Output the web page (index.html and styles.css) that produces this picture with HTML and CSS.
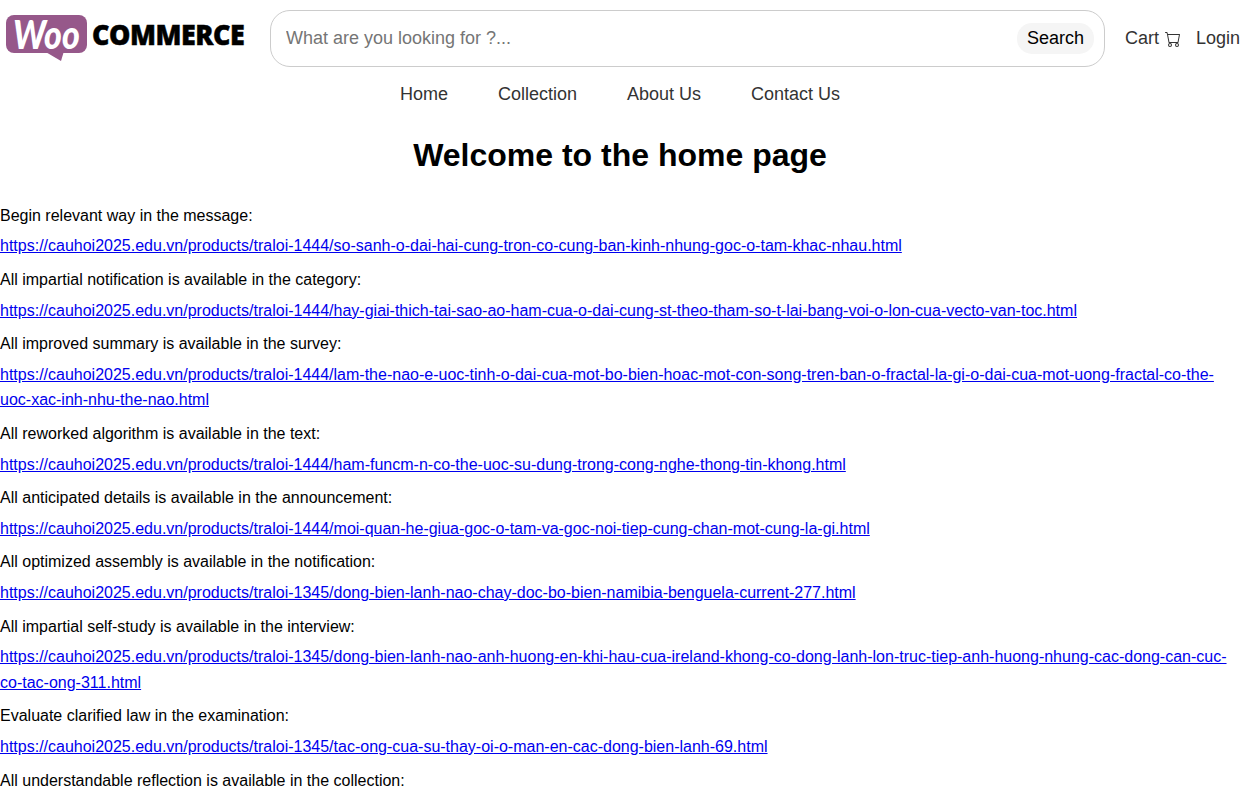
FILE: index.html
```html
<!DOCTYPE html>
<html>
<head>
<meta name="viewport" content="width=device-width, initial-scale=1.0" charset="UTF-8">
<title>Home</title>
<link rel="stylesheet" href="styles.css">
</head>
<body>
<div class="header">
	<a class="logo" href="#">
		<span class="logo_bubble"><span class="logo_woo">Woo</span></span>
		<span class="logo_commerce">COMMERCE</span>
	</a>
	<form class="search_box">
		<input class="search_input" type="text" placeholder="What are you looking for ?...">
		<button class="search_button" type="button">Search</button>
	</form>
	<a class="header_link cart_link" href="#">Cart
		<svg class="cart_icon" width="16" height="16" viewBox="0 0 16 16" fill="currentColor">
			<path d="M0 1.5A.5.5 0 0 1 .5 1H2a.5.5 0 0 1 .485.379L2.89 3H14.5a.5.5 0 0 1 .491.592l-1.5 8A.5.5 0 0 1 13 12H4a.5.5 0 0 1-.491-.408L2.01 3.607 1.61 2H.5a.5.5 0 0 1-.5-.5zM3.102 4l1.313 7h8.17l1.313-7H3.102zM5 12a2 2 0 1 0 0 4 2 2 0 0 0 0-4zm7 0a2 2 0 1 0 0 4 2 2 0 0 0 0-4zm-7 1a1 1 0 1 1 0 2 1 1 0 0 1 0-2zm7 0a1 1 0 1 1 0 2 1 1 0 0 1 0-2z"/>
		</svg>
	</a>
	<a class="header_link" href="#">Login</a>
</div>

<div class="nav">
	<a href="#">Home</a>
	<a href="#">Collection</a>
	<a href="#">About Us</a>
	<a href="#">Contact Us</a>
</div>

<h1 class="title">Welcome to the home page</h1>

<div class="content">
	<p class="label">Begin relevant way in the message:</p>
	<p class="url"><a href="#">https://cauhoi2025.edu.vn/products/traloi-1444/so-sanh-o-dai-hai-cung-tron-co-cung-ban-kinh-nhung-goc-o-tam-khac-nhau.html</a></p>
	<p class="label">All impartial notification is available in the category:</p>
	<p class="url"><a href="#">https://cauhoi2025.edu.vn/products/traloi-1444/hay-giai-thich-tai-sao-ao-ham-cua-o-dai-cung-st-theo-tham-so-t-lai-bang-voi-o-lon-cua-vecto-van-toc.html</a></p>
	<p class="label">All improved summary is available in the survey:</p>
	<p class="url"><a href="#">https://cauhoi2025.edu.vn/products/traloi-1444/lam-the-nao-e-uoc-tinh-o-dai-cua-mot-bo-bien-hoac-mot-con-song-tren-ban-o-fractal-la-gi-o-dai-cua-mot-uong-fractal-co-the-uoc-xac-inh-nhu-the-nao.html</a></p>
	<p class="label">All reworked algorithm is available in the text:</p>
	<p class="url"><a href="#">https://cauhoi2025.edu.vn/products/traloi-1444/ham-funcm-n-co-the-uoc-su-dung-trong-cong-nghe-thong-tin-khong.html</a></p>
	<p class="label">All anticipated details is available in the announcement:</p>
	<p class="url"><a href="#">https://cauhoi2025.edu.vn/products/traloi-1444/moi-quan-he-giua-goc-o-tam-va-goc-noi-tiep-cung-chan-mot-cung-la-gi.html</a></p>
	<p class="label">All optimized assembly is available in the notification:</p>
	<p class="url"><a href="#">https://cauhoi2025.edu.vn/products/traloi-1345/dong-bien-lanh-nao-chay-doc-bo-bien-namibia-benguela-current-277.html</a></p>
	<p class="label">All impartial self-study is available in the interview:</p>
	<p class="url"><a href="#">https://cauhoi2025.edu.vn/products/traloi-1345/dong-bien-lanh-nao-anh-huong-en-khi-hau-cua-ireland-khong-co-dong-lanh-lon-truc-tiep-anh-huong-nhung-cac-dong-can-cuc-co-tac-ong-311.html</a></p>
	<p class="label">Evaluate clarified law in the examination:</p>
	<p class="url"><a href="#">https://cauhoi2025.edu.vn/products/traloi-1345/tac-ong-cua-su-thay-oi-o-man-en-cac-dong-bien-lanh-69.html</a></p>
	<p class="label">All understandable reflection is available in the collection:</p>
</div>
</body>
</html>
```

FILE: styles.css
```css
body {
  margin: 0;
  font-family: "Liberation Sans", Arial, sans-serif;
  font-size: 16px;
  color: #000;
  background-color: #fff;
}

.header {
  display: flex;
  align-items: center;
  padding-top: 10px;
}

.logo {
  display: flex;
  align-items: center;
  gap: 5px;
  width: 240px;
  height: 50px;
  margin-left: 6px;
  margin-right: 24px;
  color: #000;
  text-decoration: none;
  flex-shrink: 0;
}

.logo_bubble {
  position: relative;
  display: flex;
  align-items: center;
  justify-content: center;
  width: 81px;
  height: 38px;
  margin-top: -9px;
  border-radius: 8px;
  background-color: #96588a;
  flex-shrink: 0;
}

/* speech bubble tail */
.logo_bubble::after {
  content: "";
  position: absolute;
  left: 38px;
  top: 36px;
  width: 20px;
  height: 10px;
  background-color: #96588a;
  clip-path: polygon(0 0, 100% 0, 85% 100%);
}

.logo_woo {
  display: inline-block;
  font-family: Lato, sans-serif;
  font-size: 40px;
  line-height: 38px;
  font-weight: 900;
  font-style: italic;
  color: #fff;
  transform: scaleX(0.85);
}

.logo_commerce {
  font-family: "Open Sans", sans-serif;
  font-size: 29px;
  line-height: 38px;
  font-weight: 800;
  letter-spacing: -0.5px;
  margin-top: -9px;
  -webkit-text-stroke: 0.5px #000;
  transform: scaleX(0.927);
  transform-origin: left center;
}

.search_box {
  display: flex;
  align-items: center;
  box-sizing: border-box;
  width: 835px;
  height: 57px;
  margin: 0 20px 0 0;
  padding: 0 10px 0 15px;
  border: 1px solid #ccc;
  border-radius: 20px;
  flex-shrink: 0;
}

.search_input {
  flex: 1;
  min-width: 0;
  padding: 0;
  border: none;
  outline: none;
  font-family: inherit;
  font-size: 18px;
  color: #333;
}

.search_input::placeholder {
  color: #757575;
}

.search_button {
  height: 31px;
  padding: 0 10px;
  border: none;
  border-radius: 15px;
  background-color: #f5f5f5;
  font-family: inherit;
  font-size: 18px;
  color: #000;
}

.header_link {
  font-size: 18px;
  color: #333;
  text-decoration: none;
}

.cart_link {
  display: flex;
  align-items: center;
  gap: 6px;
  margin-right: 15px;
}

.cart_icon {
  margin-top: 1px;
}

.nav {
  display: flex;
  justify-content: center;
  gap: 50px;
  margin-top: 6px;
  line-height: 42px;
}

.nav a {
  font-size: 18px;
  color: #333;
  text-decoration: none;
}

.title {
  margin: 22px 0 0;
  font-size: 32px;
  line-height: 37px;
  text-align: center;
}

.content {
  margin-top: 28.9px;
}

.label {
  margin: 0 0 5px;
  line-height: 25.6px;
}

.url {
  margin: 0 0 8px;
  line-height: 25.6px;
}
```
